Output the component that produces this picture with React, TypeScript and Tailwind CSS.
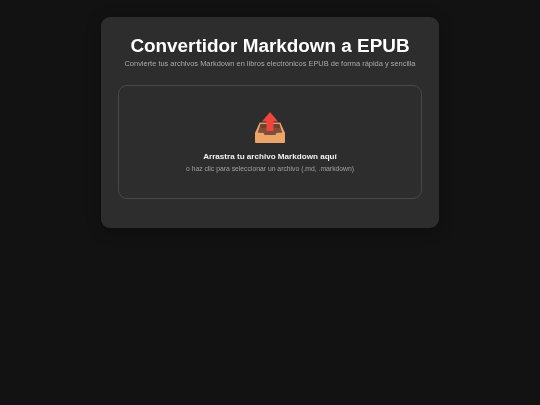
export default function App() {
  return (
    <div className="min-h-screen bg-[#121212] pt-[17px] font-['Liberation_Sans',Arial,sans-serif]">
      <div className="mx-auto w-[338px] h-[211px] rounded-[9px] bg-[#2d2d2e] px-[17px] pt-[17px] shadow-[0_3px_15px_rgba(0,0,0,0.3)]">
        <h1 className="text-center text-[18.9px] leading-[23px] font-bold text-white whitespace-nowrap blur-[0.25px]">Convertidor Markdown a EPUB</h1>
        <p className="mt-[2px] text-center text-[7.45px] leading-[9px] text-[#a9a9a9] whitespace-nowrap blur-[0.25px]">Convierte tus archivos Markdown en libros electrónicos EPUB de forma rápida y sencilla</p>
        <div className="mt-[17px] h-[114px] rounded-[9px] border border-[#48484a] flex flex-col items-center pt-[26px]">
          <svg width="30" height="31" viewBox="0 0 30 31" className="block">
            <path d="M4.5 11 H25.5 L30 21 V30 Q30 31 29 31 H1 Q0 31 0 30 V21 Z" fill="#eda468" />
            <path d="M5.5 12 H24.5 L27 20.5 H21.5 Q21 23 19 23 H11 Q9 23 8.5 20.5 H3 Z" fill="#6b4130" />
            <path d="M4.5 16 H25.5 L27 20.5 H21.5 Q21 23 19 23 H11 Q9 23 8.5 20.5 H3 Z" fill="#7f4f38" />
            <path d="M4.5 11 H25.5" stroke="#c99a70" strokeWidth="1" />
            <path d="M15 0 L23 9.5 H18.5 V19 H11.5 V9.5 H7 Z" fill="#f1443c" />
          </svg>
          <p className="mt-[9px] text-[8.1px] leading-[10px] font-bold text-[#f0f0f0] whitespace-nowrap blur-[0.25px]">Arrastra tu archivo Markdown aquí</p>
          <p className="mt-[2px] text-[6.8px] leading-[9px] text-[#a0a0a0] whitespace-nowrap blur-[0.25px]">o haz clic para seleccionar un archivo (.md, .markdown)</p>
        </div>
      </div>
    </div>
  );
}
